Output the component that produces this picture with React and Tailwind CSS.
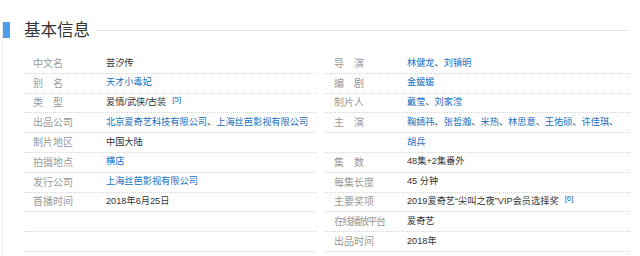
import React from "react"

const font = "font-['Liberation_Sans','Noto_Sans_CJK_SC',sans-serif]"

function Links ({ items, trailing }) {
    return (
        <>
            {items.map((t, i) => (
                <React.Fragment key={t}>
                    <a className="text-[#136ec2]">{t}</a>
                    {(i < items.length - 1 || trailing) && <span className="text-[#333]">、</span>}
                </React.Fragment>
            ))}
        </>
    )
}

function Sup ({ n }) {
    return <sup className="ml-[6px] text-[8px] text-[#136ec2] relative -top-[3px]">[{n}]</sup>
}

function Row ({ label, spaced, squeeze, children }) {
    return (
        <div className="flex items-center h-[19.8px] border-b border-dotted border-[#d6d6d6]">
            <div className={"shrink-0 w-[82px] pl-[9px] text-[10px] text-[#999] whitespace-nowrap " + (spaced ? "tracking-[10px]" : squeeze ? "tracking-[-1.6px]" : "")}>
                {label}
            </div>
            <div className="text-[9.2px] text-[#333] whitespace-nowrap">{children}</div>
        </div>
    )
}

export default function App () {
    return (
        <div className={"w-[640px] h-[256px] bg-white pl-[2px] overflow-hidden " + font}>
            <div className="h-full border-l border-[#e8e8e8]">
                <div className="flex items-center h-[16px] mt-[22px]">
                    <div className="w-[7px] h-[16px] bg-[#4f9cee]" />
                    <h2 className="ml-[14px] text-[16.5px] leading-none text-[#333]">基本信息</h2>
                    <div className="ml-[5px] w-[533px] h-px bg-[#e4e4e4]" />
                </div>

                <div className="flex mt-[16px] ml-[21px]">
                    <div className="w-[292px]">
                        <Row label="中文名">芸汐传</Row>
                        <Row label="别名" spaced><Links items={["天才小毒妃"]} /></Row>
                        <Row label="类型" spaced>爱情/武侠/古装<Sup n={5} /></Row>
                        <Row label="出品公司"><Links items={["北京爱奇艺科技有限公司", "上海丝芭影视有限公司"]} /></Row>
                        <Row label="制片地区">中国大陆</Row>
                        <Row label="拍摄地点"><Links items={["横店"]} /></Row>
                        <Row label="发行公司"><Links items={["上海丝芭影视有限公司"]} /></Row>
                        <Row label="首播时间">2018年6月25日</Row>
                        <Row label="" />
                        <Row label="" />
                    </div>
                    <div className="w-[306px] ml-[8px] pl-[1px]">
                        <Row label="导演" spaced><Links items={["林健龙", "刘镇明"]} /></Row>
                        <Row label="编剧" spaced><Links items={["金媛媛"]} /></Row>
                        <Row label="制片人"><Links items={["戴莹", "刘家滢"]} /></Row>
                        <Row label="主演" spaced><Links items={["鞠婧祎", "张哲瀚", "米热", "林思意", "王佑硕", "许佳琪"]} trailing /></Row>
                        <Row label=""><Links items={["胡兵"]} /></Row>
                        <Row label="集数" spaced>48集+2集番外</Row>
                        <Row label="每集长度">45 分钟</Row>
                        <Row label="主要奖项">2019爱奇艺“尖叫之夜”VIP会员选择奖<Sup n={6} /></Row>
                        <Row label="在线播放平台" squeeze>爱奇艺</Row>
                        <Row label="出品时间">2018年</Row>
                    </div>
                </div>
            </div>
        </div>
    )
}
